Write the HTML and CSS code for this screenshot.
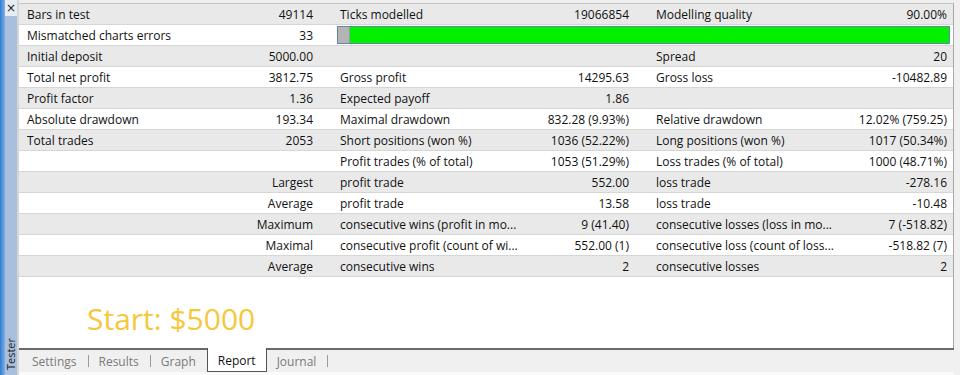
FILE: index.html
```html
<!DOCTYPE html>
<html lang="en">
<head>
    <meta charset="UTF-8">
    <title>Tester - Report</title>
    <link rel="stylesheet" href="styles.css">
</head>
<body>
<div class="window">
    <div class="desktop"></div>
    <aside class="side">
        <span class="close">×</span>
        <span class="side-title">Tester</span>
    </aside>
    <main class="main">
        <div class="report">
            <div class="row">
                <div class="cell"><span>Bars in test</span><span>49114</span></div>
                <div class="cell"><span>Ticks modelled</span><span>19066854</span></div>
                <div class="cell"><span>Modelling quality</span><span>90.00%</span></div>
            </div>
            <div class="row">
                <div class="cell"><span>Mismatched charts errors</span><span>33</span></div>
                <div class="bar-cell">
                    <div class="bar"><div class="bar-gray"></div><div class="bar-green"></div></div>
                </div>
            </div>
            <div class="row">
                <div class="cell"><span>Initial deposit</span><span>5000.00</span></div>
                <div class="cell"></div>
                <div class="cell"><span>Spread</span><span>20</span></div>
            </div>
            <div class="row">
                <div class="cell"><span>Total net profit</span><span>3812.75</span></div>
                <div class="cell"><span>Gross profit</span><span>14295.63</span></div>
                <div class="cell"><span>Gross loss</span><span>-10482.89</span></div>
            </div>
            <div class="row">
                <div class="cell"><span>Profit factor</span><span>1.36</span></div>
                <div class="cell"><span>Expected payoff</span><span>1.86</span></div>
                <div class="cell"></div>
            </div>
            <div class="row">
                <div class="cell"><span>Absolute drawdown</span><span>193.34</span></div>
                <div class="cell"><span>Maximal drawdown</span><span>832.28 (9.93%)</span></div>
                <div class="cell"><span>Relative drawdown</span><span>12.02% (759.25)</span></div>
            </div>
            <div class="row">
                <div class="cell"><span>Total trades</span><span>2053</span></div>
                <div class="cell"><span>Short positions (won %)</span><span>1036 (52.22%)</span></div>
                <div class="cell"><span>Long positions (won %)</span><span>1017 (50.34%)</span></div>
            </div>
            <div class="row">
                <div class="cell"></div>
                <div class="cell"><span>Profit trades (% of total)</span><span>1053 (51.29%)</span></div>
                <div class="cell"><span>Loss trades (% of total)</span><span>1000 (48.71%)</span></div>
            </div>
            <div class="row">
                <div class="cell"><span></span><span>Largest</span></div>
                <div class="cell"><span>profit trade</span><span>552.00</span></div>
                <div class="cell"><span>loss trade</span><span>-278.16</span></div>
            </div>
            <div class="row">
                <div class="cell"><span></span><span>Average</span></div>
                <div class="cell"><span>profit trade</span><span>13.58</span></div>
                <div class="cell"><span>loss trade</span><span>-10.48</span></div>
            </div>
            <div class="row">
                <div class="cell"><span></span><span>Maximum</span></div>
                <div class="cell"><span>consecutive wins (profit in mo...</span><span>9 (41.40)</span></div>
                <div class="cell"><span>consecutive losses (loss in mo...</span><span>7 (-518.82)</span></div>
            </div>
            <div class="row">
                <div class="cell"><span></span><span>Maximal</span></div>
                <div class="cell"><span>consecutive profit (count of wi...</span><span>552.00 (1)</span></div>
                <div class="cell"><span>consecutive loss (count of loss...</span><span>-518.82 (7)</span></div>
            </div>
            <div class="row">
                <div class="cell"><span></span><span>Average</span></div>
                <div class="cell"><span>consecutive wins</span><span>2</span></div>
                <div class="cell"><span>consecutive losses</span><span>2</span></div>
            </div>
            <div class="blank">
                <p class="start">Start: $5000</p>
            </div>
        </div>
        <nav class="tabs">
            <span class="tab">Settings</span>
            <span class="tab">Results</span>
            <span class="tab">Graph</span>
            <span class="tab active">Report</span>
            <span class="tab">Journal</span>
        </nav>
    </main>
</div>
</body>
</html>
```

FILE: styles.css
```css
body {
    margin: 0;
    background-color: #f0f0f0;
    font-family: "Open Sans", "Noto Sans", Arial, sans-serif;
    font-size: 12px;
    color: #111;
}

.window {
    display: flex;
    width: 960px;
    height: 375px;
    overflow: hidden;
}

.desktop {
    width: 5px;
    background: linear-gradient(to right, #2f7cd4, #7fb0e4);
}

.side {
    width: 12px;
    background-color: #a8c0dd;
    border-right: 2px solid #d6d6d6;
    display: flex;
    flex-direction: column;
    justify-content: space-between;
    align-items: center;
}

.close {
    width: 100%;
    text-align: center;
    background-color: #e8edf3;
    font-size: 12px;
    line-height: 16px;
    font-family: "DejaVu Sans", sans-serif;
    color: #222;
}

.side-title {
    writing-mode: vertical-rl;
    transform: rotate(180deg);
    font-size: 11px;
    line-height: 12px;
    margin-bottom: 5px;
    color: #222;
}

.main {
    flex: 1;
    display: flex;
    flex-direction: column;
    padding-top: 3px;
    padding-right: 6px;
}

.report {
    flex: 1;
    display: flex;
    flex-direction: column;
    background-color: #fff;
    border-top: 1px solid #c4c4c4;
    border-right: 1px solid #a8a8a8;
}

.row {
    display: grid;
    grid-template-columns: 313px 316px 303px;
    height: 20px;
    border-bottom: 1px solid #d6d6d6;
}

.row:nth-child(odd) {
    background-color: #e9e9e9;
}

.cell {
    display: flex;
    justify-content: space-between;
    align-items: center;
    padding: 0 19px 0 8px;
    white-space: nowrap;
}

.cell:last-child {
    padding-right: 4px;
}

.bar-cell {
    grid-column: 2 / 4;
    padding: 1px 1px 1px 5px;
}

.bar {
    display: flex;
    height: 16px;
    border: 1px solid #5f8aa6;
}

.bar-gray {
    width: 11px;
    background-color: #b4b4b4;
    border-right: 1px solid #8aa0a0;
}

.bar-green {
    flex: 1;
    background-color: #00f000;
}

.blank {
    flex: 1;
    background-color: #fff;
}

.start {
    margin: 21px 0 0 68px;
    font-size: 30px;
    color: #f6c73a;
}

.tabs {
    display: flex;
    height: 22px;
    border-top: 2px solid #6a6a6a;
    border-bottom: 3px solid #fafafa;
    padding-left: 3px;
}

.tab {
    padding: 0 11px 0 10px;
    margin: 5px 0;
    line-height: 14px;
    font-size: 12px;
    color: #7a7a7a;
    border-right: 1px solid #9a9a9a;
}

.tab:nth-child(3) {
    border-right: none;
}

.tab.active {
    margin: 0;
    margin-top: -2px;
    line-height: 21px;
    color: #111;
    background-color: #fff;
    border: 1px solid #555;
    border-top: none;
    padding: 2px 10px 0;
}
```
